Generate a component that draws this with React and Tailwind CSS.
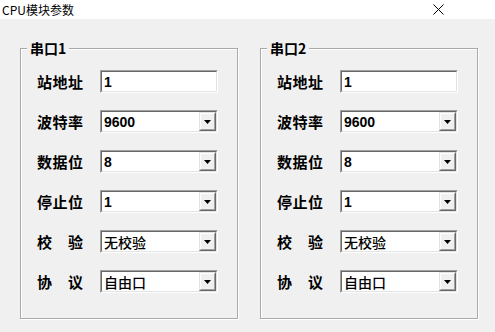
import React from "react";

const cjk = { fontFamily: '"Noto Sans CJK SC", "Noto Sans", sans-serif' };
const mix = { fontFamily: '"Liberation Sans", "Noto Sans CJK SC", sans-serif' };

function Sunken({ children }) {
  return (
    <div className="w-[118px] h-[23px] border border-t-[#a0a0a0] border-l-[#a0a0a0] border-b-white border-r-white">
      <div className="w-full h-full border border-t-[#696969] border-l-[#696969] border-b-[#e3e3e3] border-r-[#e3e3e3] bg-white flex items-stretch">
        {children}
      </div>
    </div>
  );
}

function Edit({ value }) {
  return (
    <Sunken>
      <div className="flex-1 flex items-center pl-[2px] text-[14px] font-bold text-black leading-none" style={mix}>
        {value}
      </div>
    </Sunken>
  );
}

function Combo({ value, cjkText }) {
  return (
    <Sunken>
      <div
        className={`flex-1 flex items-center pl-[2px] text-[14px] text-black leading-none ${cjkText ? "font-medium" : "font-bold"}`}
        style={cjkText ? cjk : mix}
      >
        {value}
      </div>
      <div className="w-[17px] border border-t-[#e3e3e3] border-l-[#e3e3e3] border-b-[#696969] border-r-[#696969]">
        <div className="w-full h-full border border-t-white border-l-white border-b-[#a0a0a0] border-r-[#a0a0a0] bg-[#f0f0f0] flex items-center justify-center">
          <svg width="7" height="4" viewBox="0 0 7 4">
            <path d="M0 0H7L3.5 4Z" fill="#000" />
          </svg>
        </div>
      </div>
    </Sunken>
  );
}

function Label({ text }) {
  const chars = Array.from(text);
  return (
    <div className="w-[46px] flex justify-between text-[15px] font-bold text-black leading-none" style={cjk}>
      {chars.map((c, i) => (
        <span key={i}>{c}</span>
      ))}
    </div>
  );
}

function Row({ label, children }) {
  return (
    <div className="flex items-center">
      <div className="w-[79px] pl-[16px] shrink-0">
        <Label text={label} />
      </div>
      {children}
    </div>
  );
}

function Group({ title }) {
  return (
    <div className="relative w-[218px] h-[271px] border border-[#a9a9a9] shadow-[inset_1px_1px_0_#ffffff,1px_1px_0_#ffffff]">
      <div
        className="absolute left-[6px] top-[-10px] px-[3px] bg-[#f0f0f0] text-[14px] font-bold leading-[18px] text-black"
        style={cjk}
      >
        {title}
      </div>
      <div className="flex flex-col gap-[17px] pt-[21px]">
        <Row label="站地址">
          <Edit value="1" />
        </Row>
        <Row label="波特率">
          <Combo value="9600" />
        </Row>
        <Row label="数据位">
          <Combo value="8" />
        </Row>
        <Row label="停止位">
          <Combo value="1" />
        </Row>
        <Row label="校验">
          <Combo value="无校验" cjkText />
        </Row>
        <Row label="协议">
          <Combo value="自由口" cjkText />
        </Row>
      </div>
    </div>
  );
}

export default function App() {
  return (
    <div className="w-[495px] h-[332px] bg-[#f0f0f0] flex flex-col overflow-hidden">
      <div className="h-[19px] bg-white flex items-center justify-between shrink-0">
        <span className="pl-[2px] text-[12px] text-black leading-none" style={cjk}>
          CPU模块参数
        </span>
        <svg className="mr-[51px]" width="11" height="11" viewBox="0 0 11 11">
          <path d="M0.5 0.5L10.5 10.5M10.5 0.5L0.5 10.5" stroke="#000" strokeWidth="1" />
        </svg>
      </div>
      <div className="flex gap-[22px] pl-[20px] pt-[29px]">
        <Group title="串口1" />
        <Group title="串口2" />
      </div>
    </div>
  );
}
